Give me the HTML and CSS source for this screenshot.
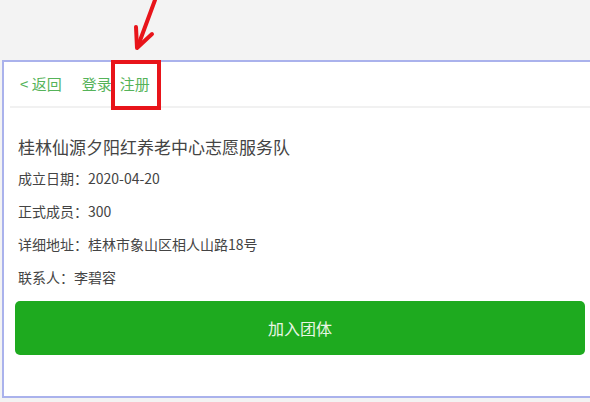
FILE: index.html
```html
<!DOCTYPE html>
<html lang="zh-CN">
<head>
  <meta charset="UTF-8">
  <meta name="viewport" content="width=device-width, initial-scale=1.0">
  <title>团体详情</title>
  <link rel="stylesheet" href="styles.css">
</head>
<body>
  <div class="stage">
    <div class="frame">
      <nav class="topnav">
        <a class="back" href="#">&lt; 返回</a>
        <a href="#">登录</a>
        <a href="#">注册</a>
      </nav>

      <div class="info">
        <h2>桂林仙源夕阳红养老中心志愿服务队</h2>
        <p>成立日期：2020-04-20</p>
        <p>正式成员：300</p>
        <p>详细地址：桂林市象山区相人山路18号</p>
        <p>联系人：李碧容</p>
      </div>

      <button class="join">加入团体</button>
    </div>

    <!-- annotation drawn over the screenshot -->
    <div class="mark"></div>
    <svg class="arrow" width="40" height="52" viewBox="0 0 40 52">
      <path d="M31 0 L14 46" stroke="#e8141a" stroke-width="4" fill="none" stroke-linecap="round"/>
      <path d="M12 27 L13 48 L28 34" stroke="#e8141a" stroke-width="4" fill="none" stroke-linecap="round" stroke-linejoin="round"/>
    </svg>
  </div>
</body>
</html>
```

FILE: styles.css
```css
body {
  margin: 0;
  background: #f3f3f3;
  font-family: "Noto Sans CJK SC", "Liberation Sans", sans-serif;
  color: #444;
}

.stage {
  position: relative;
  height: 402px;
  padding-top: 60px;
  box-sizing: border-box;
}

.frame {
  margin-left: 2px;
  height: 334px;
  background: #fff;
  border-top: 2px solid #aab2ec;
  border-left: 2px solid #aab2ec;
  border-bottom: 2px solid #aab2ec;
}

.topnav {
  display: flex;
  align-items: center;
  height: 42px;
  margin-left: 6px;
  padding-left: 10px;
  padding-bottom: 2px;
  border-bottom: 2px solid #f1f1f1;
  font-size: 15px;
}

.topnav a {
  color: #55b35a;
  text-decoration: none;
  margin-right: 8px;
}

.topnav .back {
  margin-right: 20px;
}

.info {
  padding: 27px 0 0 14px;
}

.info h2 {
  margin: 0 0 3px;
  font-size: 17px;
  font-weight: normal;
  color: #444;
  line-height: 24px;
}

.info p {
  margin: 0;
  font-size: 14px;
  line-height: 33px;
}

.join {
  display: block;
  margin: 7px 0 0 11px;
  width: 570px;
  height: 54px;
  border: none;
  border-radius: 5px;
  background: #1eaa1f;
  color: #e9f6e4;
  font-family: inherit;
  font-size: 16px;
}

.mark {
  position: absolute;
  left: 111px;
  top: 60px;
  width: 42px;
  height: 42px;
  border: 4px solid #e8141a;
}

.arrow {
  position: absolute;
  left: 124px;
  top: 0;
}
```
